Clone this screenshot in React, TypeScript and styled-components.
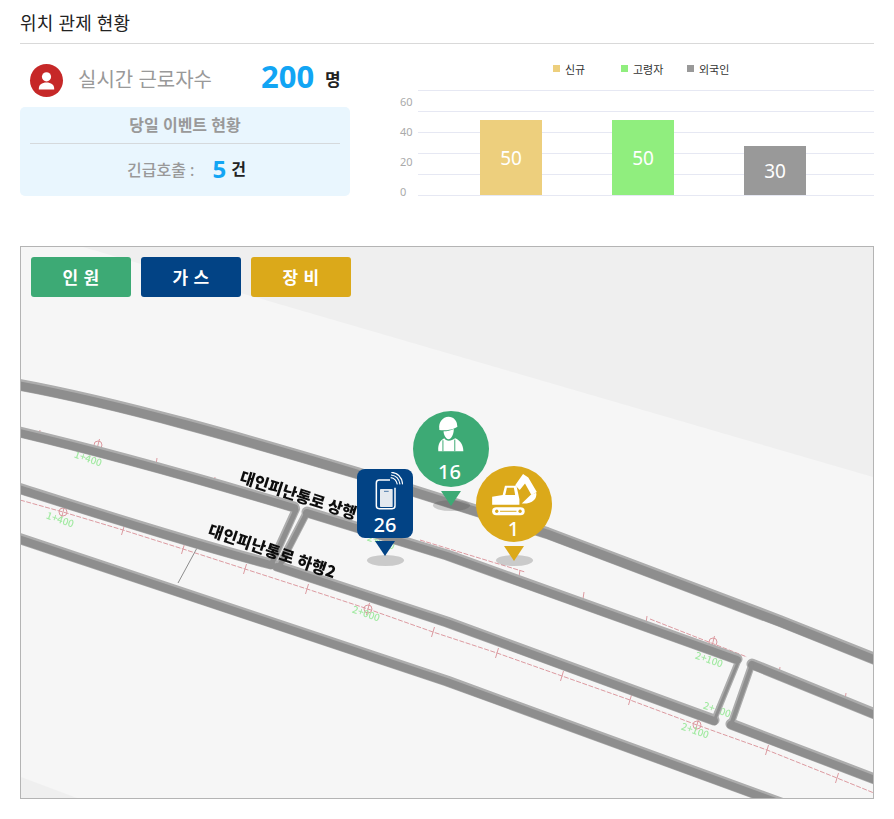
import React from 'react'
import styled, { createGlobalStyle } from 'styled-components'

const GlobalStyle = createGlobalStyle`
  html, body {
    margin: 0;
    padding: 0;
    background: #fff;
    font-family: "Noto Sans", "Noto Sans CJK KR", sans-serif;
  }
`

const Page = styled.div`
  width: 854px;
  padding: 0 20px;
`

const TitleBar = styled.div`
  height: 43px;
  box-sizing: content-box;
  border-bottom: 1px solid #d9d9d9;
  font-size: 18px;
  line-height: 47px;
  letter-spacing: 0.2px;
  color: #222;
  font-weight: 400;
`

const Summary = styled.div`
  display: flex;
  height: 202px;
  gap: 30px;
`

const LeftColumn = styled.div`
  width: 330px;
  padding-top: 20px;
`

const WorkerRow = styled.div`
  display: flex;
  align-items: center;
  height: 33px;
  padding-left: 10px;
`

const RedBadge = styled.div`
  width: 33px;
  height: 33px;
  border-radius: 50%;
  background: #c62828;
  display: flex;
  align-items: center;
  justify-content: center;
  flex-shrink: 0;
`

const WorkerLabel = styled.span`
  margin: -5px 0 0 15px;
  width: 183px;
  font-size: 20px;
  color: #999;
  font-weight: 400;
`

const WorkerCount = styled.span`
  margin-top: -10px;
  font-size: 31px;
  font-weight: 700;
  color: #12a5f4;
  width: 64px;
`

const Unit = styled.span<{ $size: number; $lift: number }>`
  margin-top: -${(p) => p.$lift}px;
  font-size: ${(p) => p.$size}px;
  font-weight: 700;
  color: #222;
`

const EventBox = styled.div`
  margin-top: 10px;
  height: 89px;
  background: #e9f6fe;
  border-radius: 5px;
  padding: 0 10px;
  box-sizing: border-box;
`

const EventTitle = styled.div`
  height: 36px;
  line-height: 37px;
  text-align: center;
  font-size: 16px;
  font-weight: 700;
  color: #999;
  border-bottom: 1px solid #d5d9dc;
`

const EventRow = styled.div`
  display: flex;
  align-items: center;
  justify-content: center;
  height: 50px;
  padding-left: 3px;
`

const EventLabel = styled.span`
  font-size: 16px;
  font-weight: 500;
  color: #999;
  margin-right: 18px;
`

const EventCount = styled.span`
  margin-top: -2px;
  font-size: 24px;
  font-weight: 700;
  color: #12a5f4;
  margin-right: 5px;
`

const ChartWrap = styled.div`
  width: 494px;
  height: 160px;
  margin-top: 6px;
`

const ChartSvg = styled.svg`
  display: block;
  font-family: "Noto Sans", "Noto Sans CJK KR", sans-serif;
`

const MapFrame = styled.div`
  position: relative;
  width: 854px;
  height: 553px;
  box-sizing: border-box;
  border: 1px solid #b4b4b4;
  background: #f6f6f6;
  overflow: hidden;
`

const MapDrawing = styled.svg`
  position: absolute;
  left: 0;
  top: 0;
  font-family: "Noto Sans CJK KR", sans-serif;
`

const ButtonRow = styled.div`
  position: relative;
  display: flex;
  gap: 10px;
  padding: 10px;
`

const LayerButton = styled.button<{ $bg: string }>`
  width: 100px;
  height: 40px;
  border: 0;
  border-radius: 3px;
  background: ${(p) => p.$bg};
  color: #fff;
  font-family: inherit;
  font-size: 17px;
  font-weight: 700;
  letter-spacing: 0.5px;
  padding: 0 0 2px;
`

const Pin = styled.div<{ $x: number; $y: number }>`
  position: absolute;
  left: ${(p) => p.$x - 21}px;
  top: ${(p) => p.$y - 247}px;
  display: flex;
  flex-direction: column;
  align-items: center;
`

const PinShadow = styled.div<{ $top: number }>`
  position: absolute;
  top: ${(p) => p.$top}px;
  left: 50%;
  width: 37px;
  height: 11px;
  margin-left: -18.5px;
  border-radius: 50%;
  background: rgba(70, 70, 70, 0.25);
`

const PinHead = styled.div<{ $bg: string; $round: boolean }>`
  position: relative;
  background: ${(p) => p.$bg};
  width: ${(p) => (p.$round ? 76 : 56)}px;
  height: ${(p) => (p.$round ? 76 : 69)}px;
  border-radius: ${(p) => (p.$round ? '50%' : '8px')};
  display: flex;
  flex-direction: column;
  align-items: center;
  color: #fff;
`

const PinNumber = styled.span<{ $top: number; $shift: number }>`
  position: absolute;
  top: ${(p) => p.$top}px;
  left: ${(p) => p.$shift}px;
  right: 0;
  text-align: center;
  font-size: 20px;
  line-height: 24px;
  font-weight: 500;
`

const PinIcon = styled.svg<{ $top: number; $left: number }>`
  position: absolute;
  top: ${(p) => p.$top}px;
  left: ${(p) => p.$left}px;
`

const PinTip = styled.div<{ $color: string; $gap: number }>`
  position: relative;
  margin-top: ${(p) => p.$gap}px;
  width: 0;
  height: 0;
  border-left: 10.5px solid transparent;
  border-right: 10.5px solid transparent;
  border-top: 15px solid ${(p) => p.$color};
`

const legend = [
  { x: 553, label: '신규', color: '#edcf7d' },
  { x: 621, label: '고령자', color: '#90ee7e' },
  { x: 687, label: '외국인', color: '#999999' }
]
const bars = [
  { x: 480, y: 120, value: 50, color: '#edcf7d' },
  { x: 612, y: 120, value: 50, color: '#90ee7e' },
  { x: 744, y: 146, value: 30, color: '#999999' }
]
const gridLines = [90, 111, 132, 153, 174, 195]
const axisLabels = [
  { y: 106, text: '60' },
  { y: 136, text: '40' },
  { y: 166, text: '20' },
  { y: 196, text: '0' }
]

const Chart = () => (
  <ChartWrap>
    <ChartSvg width="494" height="160" viewBox="380 50 494 160">
      {legend.map((item) => (
        <g key={item.label}>
          <rect x={item.x} y={65} width={7} height={7} fill={item.color} />
          <text x={item.x + 12} y={74} fontSize="11" fill="#333">
            {item.label}
          </text>
        </g>
      ))}
      {gridLines.map((y) => (
        <line key={y} x1={418} x2={874} y1={y + 0.5} y2={y + 0.5} stroke="#e6e8f3" />
      ))}
      {axisLabels.map((item) => (
        <text key={item.text} x={400} y={item.y} fontSize="11" fill="#aaa">
          {item.text}
        </text>
      ))}
      {bars.map((bar) => (
        <g key={bar.x}>
          <rect x={bar.x} y={bar.y} width={62} height={195 - bar.y} fill={bar.color} />
          <text x={bar.x + 31} y={(bar.y + 195) / 2 + 7} fontSize="19" fill="#fff" textAnchor="middle">
            {bar.value}
          </text>
        </g>
      ))}
    </ChartSvg>
  </ChartWrap>
)

// road centre lines, in page coordinates
const roads = [
  { d: 'M15 384 C120 403 250 441 357 473 L547 533 L780 621 L880 661', w: 12 },
  { d: 'M15 431 C100 451 200 479 294 507', w: 11 },
  { d: 'M307 512 L447 555 L737 659', w: 11 },
  { d: 'M752 664 L880 716', w: 11 },
  { d: 'M15 487 C100 514 190 543 271 564', w: 11 },
  { d: 'M277 566 L447 622 L714 720', w: 11 },
  { d: 'M731 724 L880 781', w: 11 },
  { d: 'M15 537 L447 681 L800 810', w: 11 },
  { d: 'M271 564 L296 509', w: 8 },
  { d: 'M279 566 L307 512', w: 8 },
  { d: 'M714 720 L739 659', w: 6 },
  { d: 'M731 724 L752 664', w: 7 }
]

const redMain = 'M20 500 L63 512 L123 530 L183 549 L245 569 L307 589 L368 609 L433 632 L497 653 L562 676 L630 700 L697 725 L767 750 L837 778 L874 793'
const redUpper = 'M420 540 L525 572 M650 619 L747 657'
const ticks: [number, number][] = [
  [123, 530], [183, 549], [245, 569], [307, 589], [433, 632], [497, 653], [562, 676], [630, 700], [767, 750], [837, 778]
]
const upperTicks: [number, number][] = [
  [40, 430], [157, 458], [215, 477], [457, 552], [520, 570], [584, 592], [647, 616], [780, 667], [846, 693]
]
const stations: [number, number][] = [[63, 512], [368, 609], [697, 725], [98, 445], [713, 642]]
const greenLabels = [
  { x: 87, y: 462, text: '1+400' },
  { x: 59, y: 523, text: '1+400' },
  { x: 365, y: 617, text: '2+000' },
  { x: 708, y: 663, text: '2+100' },
  { x: 694, y: 734, text: '2+100' },
  { x: 716, y: 713, text: '2+100' },
  { x: 380, y: 545, text: '2+000' }
]

const MapBackground = () => (
  <MapDrawing width="852" height="551" viewBox="21 247 852 551">
    <defs>
      <filter id="soft" x="-5%" y="-5%" width="110%" height="110%">
        <feGaussianBlur stdDeviation="0.6" />
      </filter>
    </defs>
    <polygon points="83,247 447,353 873,477 873,247" fill="#efefef" />
    <polygon points="21,777 77,798 21,798" fill="#efefef" />
    <g filter="url(#soft)">
      <path d={redMain} fill="none" stroke="#dc9aa0" strokeWidth="1" strokeDasharray="5 1.5" />
      <path d={redUpper} fill="none" stroke="#dc9aa0" strokeWidth="1" strokeDasharray="5 1.5" />
      {ticks.map(([x, y]) => (
        <line key={`${x}-${y}`} x1={x - 1.5} y1={y + 5} x2={x + 1.5} y2={y - 5} stroke="#dc9aa0" />
      ))}
      {upperTicks.map(([x, y]) => (
        <line key={`${x}-${y}`} x1={x - 1} y1={y + 7} x2={x} y2={y} stroke="#dc9aa0" />
      ))}
      {stations.map(([x, y]) => (
        <g key={x} fill="none" stroke="#dc9aa0">
          <circle cx={x} cy={y} r={4} />
          <line x1={x - 1.5} y1={y + 6} x2={x + 1.5} y2={y - 6} />
        </g>
      ))}
      {greenLabels.map((item) => (
        <text
          key={`${item.x}`}
          x={item.x}
          y={item.y}
          fontSize="10"
          fontWeight="500"
          fill="#a2eaa2"
          textAnchor="middle"
          transform={`rotate(19 ${item.x} ${item.y})`}
        >
          {item.text}
        </text>
      ))}
      <line x1={197} y1={548} x2={178} y2={583} stroke="#8c8c8c" strokeWidth="1" />
      {roads.map((road) => (
        <path key={road.d} d={road.d} fill="none" stroke="#adadad" strokeWidth={road.w} strokeLinejoin="round" strokeLinecap="round" />
      ))}
      {roads.map((road) => (
        <path key={`${road.d}-core`} d={road.d} fill="none" stroke="#8e8e8e" strokeWidth={road.w - 3} strokeLinejoin="round" strokeLinecap="round" transform="translate(0 1)" />
      ))}
      <text x={298} y={501} fontSize="16" fontWeight="900" fill="#0c0c0c" textAnchor="middle" transform="rotate(18 298 496)">
        대인피난통로 상행
      </text>
      <text x={272} y={557} fontSize="16" fontWeight="900" fill="#0c0c0c" letterSpacing="0.3" textAnchor="middle" transform="rotate(19 272 552)">
        대인피난통로 하행2
      </text>
    </g>
  </MapDrawing>
)

const WorkerIcon = () => (
  <PinIcon $top={4} $left={24} width="28" height="38" viewBox="295 48 85 114" fill="#fff">
    <path d="M302 90 C299 70 312 54 330 53 C346 53 356 66 356 78 L357 83 C345 92 318 96 302 93 Z" />
    <path d="M315 97 C325 97 336 95 346 90 C346 108 338 121 330 121 C322 121 315 108 315 97 Z" />
    <path d="M299 157 C297 137 304 125 317 118 C322 128 338 128 350 118 C365 124 375 138 375 157 Z" />
    <path d="M313 124 L313 157 M349 122 L349 157" stroke="#3daa75" strokeWidth="3" fill="none" />
  </PinIcon>
)

const PhoneIcon = () => (
  <PinIcon $top={3} $left={18} width="28" height="38" viewBox="103 215 84 114" fill="none" stroke="#fff">
    <path d="M148 239 L116 239 Q107 239 107 248 L107 316 Q107 325 116 325 L154 325 Q163 325 163 316 L163 262" strokeWidth="4.5" />
    <rect x="118" y="266" width="38" height="54" rx="2" fill="#e4e9ef" stroke="none" />
    <line x1="130" y1="273" x2="144" y2="273" stroke="#024385" strokeWidth="2" />
    <path d="M150 232 Q166 234 170 252 M151 224 Q174 226 178 252 M152 216 Q182 218 186 252" strokeWidth="3.5" />
  </PinIcon>
)

const ExcavatorIcon = () => (
  <PinIcon $top={6} $left={14} width="48" height="46" viewBox="450 215 145 140" fill="#fff">
    <path d="M456 315 L456 290 L488 285 L495 257 L530 257 L539 298 L539 315 Z" />
    <path d="M501 263 L522 263 L526 285 L496 285 Z" fill="#dba91a" />
    <path d="M526 255 L550 221 L566 232 L592 276 L576 286 L556 250 L540 270 Z" />
    <path d="M546 311 L573 285 L590 278 C594 296 578 313 546 311 Z" />
    <rect x="456" y="322" width="99" height="25" rx="12.5" />
    <circle cx="470" cy="334.5" r="5" fill="#dba91a" />
    <circle cx="541" cy="334.5" r="5" fill="#dba91a" />
    <rect x="480" y="333" width="50" height="3" fill="#dba91a" />
  </PinIcon>
)

const App = () => (
  <>
    <GlobalStyle />
    <Page>
      <TitleBar>위치 관제 현황</TitleBar>
      <Summary>
        <LeftColumn>
          <WorkerRow>
            <RedBadge>
              <svg width="17" height="18" viewBox="0 0 17 18" fill="#fff">
                <circle cx="8.5" cy="4.8" r="4.6" />
                <path d="M0.8 17.5 C0.5 12.5 4 10.5 8.5 10.5 C13 10.5 16.5 12.5 16.2 17.5 Z" />
              </svg>
            </RedBadge>
            <WorkerLabel>실시간 근로자수</WorkerLabel>
            <WorkerCount>200</WorkerCount>
            <Unit $size={17} $lift={4}>명</Unit>
          </WorkerRow>
          <EventBox>
            <EventTitle>당일 이벤트 현황</EventTitle>
            <EventRow>
              <EventLabel>긴급호출 :</EventLabel>
              <EventCount>5</EventCount>
              <Unit $size={16} $lift={2}>건</Unit>
            </EventRow>
          </EventBox>
        </LeftColumn>
        <Chart />
      </Summary>
      <MapFrame>
        <MapBackground />
        <ButtonRow>
          <LayerButton $bg="#3daa75">인 원</LayerButton>
          <LayerButton $bg="#024385">가 스</LayerButton>
          <LayerButton $bg="#dba91a">장 비</LayerButton>
        </ButtonRow>
        <Pin $x={413} $y={411}>
          <PinShadow $top={89} />
          <PinHead $bg="#3daa75" $round>
            <WorkerIcon />
            <PinNumber $top={49} $shift={-3}>16</PinNumber>
          </PinHead>
          <PinTip $color="#3daa75" $gap={4} />
        </Pin>
        <Pin $x={357} $y={469}>
          <PinShadow $top={86} />
          <PinHead $bg="#024385" $round={false}>
            <PhoneIcon />
            <PinNumber $top={44} $shift={0}>26</PinNumber>
          </PinHead>
          <PinTip $color="#024385" $gap={3} />
        </Pin>
        <Pin $x={476} $y={466}>
          <PinShadow $top={89} />
          <PinHead $bg="#dba91a" $round>
            <ExcavatorIcon />
            <PinNumber $top={51} $shift={-1}>1</PinNumber>
          </PinHead>
          <PinTip $color="#dba91a" $gap={4} />
        </Pin>
      </MapFrame>
    </Page>
  </>
)

export default App
